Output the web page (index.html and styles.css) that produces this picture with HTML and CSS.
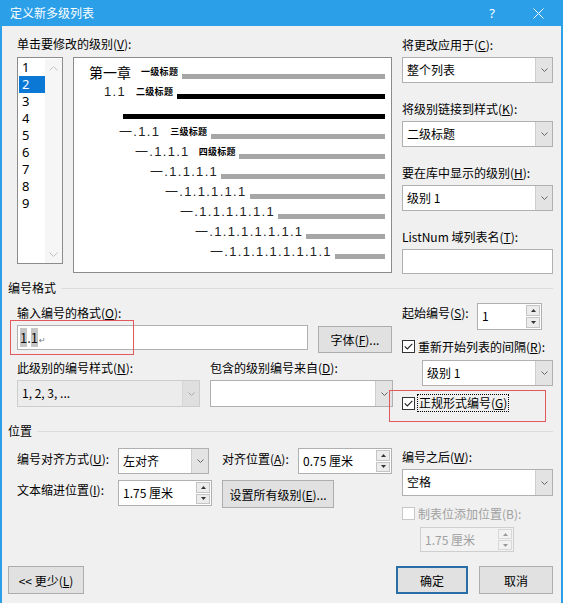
FILE: index.html
```html
<!DOCTYPE html>
<html lang="zh-CN">
<head>
<meta charset="utf-8">
<title>定义新多级列表</title>
<link rel="stylesheet" href="styles.css">
</head>
<body>
<div class="dialog">
  <div class="titlebar">
    <span class="title">定义新多级列表</span>
    <span class="tb-btn help">?</span>
    <span class="tb-btn close"><svg width="11" height="11" viewBox="0 0 11 11"><path d="M0.5 0.5L10.5 10.5M10.5 0.5L0.5 10.5" stroke="#fff" stroke-width="1" fill="none"/></svg></span>
  </div>

  <div class="content">
    <div class="top">
      <div class="top-left">
        <div class="lbl">单击要修改的级别(<u>V</u>):</div>
        <div class="levels">
          <div class="listbox">
            <div class="items">
              <div class="item">1</div>
              <div class="item sel">2</div>
              <div class="item">3</div>
              <div class="item">4</div>
              <div class="item">5</div>
              <div class="item">6</div>
              <div class="item">7</div>
              <div class="item">8</div>
              <div class="item">9</div>
            </div>
            <div class="vscroll">
              <svg width="9" height="5" viewBox="0 0 9 5"><path d="M0.5 4.5L4.5 0.5L8.5 4.5" stroke="#c2c2c2" fill="none"/></svg>
              <svg width="9" height="5" viewBox="0 0 9 5"><path d="M0.5 0.5L4.5 4.5L8.5 0.5" stroke="#c2c2c2" fill="none"/></svg>
            </div>
          </div>
          <div class="preview">
            <div class="pv p1"><span class="ch">第一章</span><span class="tag">一级标题</span><span class="bar"></span></div>
            <div class="pv p2"><span class="num">1.1</span><span class="tag">二级标题</span><span class="bar k"></span></div>
            <div class="pv p3"><span class="bar k"></span></div>
            <div class="pv p4"><span class="num">一.1.1</span><span class="tag">三级标题</span><span class="bar"></span></div>
            <div class="pv p5"><span class="num">一.1.1.1</span><span class="tag t5">四级标题</span><span class="bar"></span></div>
            <div class="pv p6"><span class="num">一.1.1.1.1</span><span class="bar"></span></div>
            <div class="pv p7"><span class="num">一.1.1.1.1.1</span><span class="bar"></span></div>
            <div class="pv p8"><span class="num">一.1.1.1.1.1.1</span><span class="bar"></span></div>
            <div class="pv p9"><span class="num">一.1.1.1.1.1.1.1</span><span class="bar"></span></div>
            <div class="pv p10"><span class="num">一.1.1.1.1.1.1.1.1</span><span class="bar"></span></div>
          </div>
        </div>
      </div>

      <div class="top-right">
        <div class="lbl">将更改应用于(<u>C</u>):</div>
        <div class="combo mt4"><span class="val">整个列表</span><span class="arr"><svg width="7" height="4" viewBox="0 0 7 4"><path d="M0.5 0.5L3.5 3.5L6.5 0.5" stroke="#666" fill="none"/></svg></span></div>
        <div class="lbl mt18">将级别链接到样式(<u>K</u>):</div>
        <div class="combo mt4"><span class="val">二级标题</span><span class="arr"><svg width="7" height="4" viewBox="0 0 7 4"><path d="M0.5 0.5L3.5 3.5L6.5 0.5" stroke="#666" fill="none"/></svg></span></div>
        <div class="lbl mt18">要在库中显示的级别(<u>H</u>):</div>
        <div class="combo mt4"><span class="val">级别 1</span><span class="arr"><svg width="7" height="4" viewBox="0 0 7 4"><path d="M0.5 0.5L3.5 3.5L6.5 0.5" stroke="#666" fill="none"/></svg></span></div>
        <div class="lbl mt18">ListNum 域列表名(<u>T</u>):</div>
        <div class="text mt4"></div>
      </div>
    </div>

    <div class="ghead">编号格式</div>

    <div class="sect">
      <div class="sect-left fmt-left">
        <div class="lbl">输入编号的格式(<u>O</u>):</div>
        <div class="input-row">
          <div class="text fmt-input"><span class="shade">1</span>.<span class="shade">1</span><span class="ret">↵</span></div>
          <div class="btn font-btn">字体(<u>F</u>)...</div>
        </div>
        <div class="two-col">
          <div class="lbl">此级别的编号样式(<u>N</u>):</div>
          <div class="lbl">包含的级别编号来自(<u>D</u>):</div>
          <div class="combo dis tall"><span class="val">1, 2, 3, ...</span><span class="arr"><svg width="7" height="4" viewBox="0 0 7 4"><path d="M0.5 0.5L3.5 3.5L6.5 0.5" stroke="#aaa" fill="none"/></svg></span></div>
          <div class="combo tall"><span class="val"></span><span class="arr"><svg width="7" height="4" viewBox="0 0 7 4"><path d="M0.5 0.5L3.5 3.5L6.5 0.5" stroke="#666" fill="none"/></svg></span></div>
        </div>
      </div>
      <div class="sect-right fmt-right">
        <div class="start-row">
          <div class="lbl start-lbl">起始编号(<u>S</u>):</div>
          <div class="spin start-spin"><span class="val">1</span><span class="btns"><span><svg width="5" height="3" viewBox="0 0 5 3"><path d="M0 3L2.5 0L5 3Z" fill="#333"/></svg></span><span><svg width="5" height="3" viewBox="0 0 5 3"><path d="M0 0L2.5 3L5 0Z" fill="#333"/></svg></span></span></div>
        </div>
        <div class="chk-row restart"><span class="chk"><svg width="9" height="7" viewBox="0 0 9 7"><path d="M0.7 3.4L3.3 6L8.3 0.8" stroke="#222" stroke-width="1.1" fill="none"/></svg></span><span>重新开始列表的间隔(<u>R</u>):</span></div>
        <div class="combo level-combo"><span class="val">级别 1</span><span class="arr"><svg width="7" height="4" viewBox="0 0 7 4"><path d="M0.5 0.5L3.5 3.5L6.5 0.5" stroke="#666" fill="none"/></svg></span></div>
        <div class="chk-row legal"><span class="chk"><svg width="9" height="7" viewBox="0 0 9 7"><path d="M0.7 3.4L3.3 6L8.3 0.8" stroke="#222" stroke-width="1.1" fill="none"/></svg></span><span class="focus">正规形式编号(<u>G</u>)</span></div>
      </div>
    </div>

    <div class="ghead pos-head">位置</div>

    <div class="sect">
      <div class="sect-left pos-left">
        <div class="prow">
          <div class="lbl plbl r1">编号对齐方式(<u>U</u>):</div>
          <div class="combo align-combo"><span class="val">左对齐</span><span class="arr"><svg width="7" height="4" viewBox="0 0 7 4"><path d="M0.5 0.5L3.5 3.5L6.5 0.5" stroke="#666" fill="none"/></svg></span></div>
          <div class="lbl plbl2 r1">对齐位置(<u>A</u>):</div>
          <div class="spin wspin"><span class="val">0.75 厘米</span><span class="btns"><span><svg width="5" height="3" viewBox="0 0 5 3"><path d="M0 3L2.5 0L5 3Z" fill="#333"/></svg></span><span><svg width="5" height="3" viewBox="0 0 5 3"><path d="M0 0L2.5 3L5 0Z" fill="#333"/></svg></span></span></div>
        </div>
        <div class="prow prow2">
          <div class="lbl plbl r2">文本缩进位置(<u>I</u>):</div>
          <div class="spin wspin"><span class="val">1.75 厘米</span><span class="btns"><span><svg width="5" height="3" viewBox="0 0 5 3"><path d="M0 3L2.5 0L5 3Z" fill="#333"/></svg></span><span><svg width="5" height="3" viewBox="0 0 5 3"><path d="M0 0L2.5 3L5 0Z" fill="#333"/></svg></span></span></div>
          <div class="btn setall">设置所有级别(<u>E</u>)...</div>
        </div>
      </div>
      <div class="sect-right pos-right">
        <div class="lbl">编号之后(<u>W</u>):</div>
        <div class="combo tall mt4"><span class="val">空格</span><span class="arr"><svg width="7" height="4" viewBox="0 0 7 4"><path d="M0.5 0.5L3.5 3.5L6.5 0.5" stroke="#666" fill="none"/></svg></span></div>
        <div class="chk-row tabrow"><span class="chk dis"></span><span class="dis-text">制表位添加位置(B):</span></div>
        <div class="spin dis tabspin"><span class="val">1.75 厘米</span><span class="btns"><span><svg width="5" height="3" viewBox="0 0 5 3"><path d="M0 3L2.5 0L5 3Z" fill="#999"/></svg></span><span><svg width="5" height="3" viewBox="0 0 5 3"><path d="M0 0L2.5 3L5 0Z" fill="#999"/></svg></span></span></div>
      </div>
    </div>

    <div class="footer">
      <div class="btn less">&lt;&lt; 更少(<u>L</u>)</div>
      <div class="btn ok def">确定</div>
      <div class="btn cancel">取消</div>
    </div>
  </div>

  <div class="mark mark1"></div>
  <div class="mark mark2"></div>
</div>
</body>
</html>
```

FILE: styles.css
```css
* { box-sizing: border-box; }
html, body { margin: 0; padding: 0; }
body {
  width: 563px;
  height: 603px;
  overflow: hidden;
  background: #f0f0f0;
  font-family: "Noto Sans CJK SC", "Noto Sans", sans-serif;
  font-size: 12px;
  color: #000;
}
u { text-decoration: underline; text-underline-offset: 1px; }

.dialog {
  position: relative;
  width: 563px;
  height: 603px;
  border-left: 2px solid #2b9fe8;
  border-right: 2px solid #2b9fe8;
  background: #f0f0f0;
}

/* title bar */
.titlebar {
  display: flex;
  align-items: center;
  height: 26px;
  background: #2b9fe8;
  color: #fff;
}
.title { padding-left: 8px; line-height: 16px; }
.tb-btn {
  width: 46px;
  height: 26px;
  display: flex;
  align-items: center;
  justify-content: center;
}
.help { margin-left: auto; font-family: "Noto Sans", sans-serif; font-size: 13px; }

.content { padding: 0 8px 0 6px; }

.lbl { height: 16px; line-height: 16px; white-space: nowrap; }
.mt4 { margin-top: 4px; }
.mt18 { margin-top: 18px; }

/* top area */
.top { display: flex; gap: 10px; padding: 10px 0 0 9px; }
.top-left { width: 375px; }
.top-right { width: 151px; padding-top: 1px; }
.levels { display: flex; gap: 10px; margin-top: 5px; align-items: flex-start; }

.listbox {
  display: flex;
  width: 46px;
  height: 207px;
  border: 1px solid #8c8c8c;
  background: #fff;
  padding: 1px 0 0 1px;
}
.items { width: 26px; }
.item {
  height: 17px;
  line-height: 17px;
  padding-left: 3px;
  font-family: "Noto Sans", sans-serif;
  font-size: 13px;
}
.item.sel { background: #0a78d4; color: #fff; }
.vscroll {
  flex: 1;
  display: flex;
  flex-direction: column;
  justify-content: space-between;
  align-items: center;
  padding: 7px 0 6px;
  background: #f6f6f6;
}

.preview {
  width: 319px;
  height: 216px;
  border: 1px solid #8c8c8c;
  background: #fff;
  padding: 4px 6px 0 0;
}
.pv { display: flex; align-items: center; height: 20px; white-space: nowrap; }
.pv .bar { flex: 1; height: 5px; margin-top: 8px; background: #a6a6a6; }
.pv .bar.k { background: #000; }
.pv .ch { font-size: 14px; line-height: 16px; }
.pv .num {
  font-family: "Liberation Sans", "Noto Sans CJK SC", sans-serif;
  font-size: 13px;
  letter-spacing: 1.3px;
  line-height: 16px;
  color: #222;
}
.pv .tag {
  font-size: 9px;
  letter-spacing: 0.3px;
  line-height: 12px;
  font-weight: bold;
  margin-left: 10px;
  margin-right: 4px;
}
.pv .tag.t5 { margin-left: 9px; margin-right: 3px; }
.pv .num + .bar { margin-left: 3px; }
.p1 { padding-left: 15px; }
.p2 { padding-left: 30px; }
.p3 { padding-left: 49px; }
.p4 { padding-left: 45px; }
.p5 { padding-left: 61px; }
.p6 { padding-left: 76px; }
.p7 { padding-left: 91px; }
.p8 { padding-left: 106px; }
.p9 { padding-left: 121px; }
.p10 { padding-left: 136px; }

/* controls */
.combo {
  display: flex;
  height: 26px;
  border: 1px solid #b0b0b0;
  background: #fff;
}
.combo.tall { height: 27px; }
.combo .val {
  flex: 1;
  padding-left: 4px;
  line-height: 24px;
  white-space: nowrap;
  overflow: hidden;
}
.combo .arr {
  width: 17px;
  background: #e3e3e3;
  border-left: 1px solid #cdcdcd;
  display: flex;
  align-items: center;
  justify-content: center;
}
.combo.dis { background: #ececec; border-color: #cdcdcd; }
.combo.dis .arr { background: #dfdfdf; border-left-color: #d6d6d6; }

.text { height: 25px; border: 1px solid #b0b0b0; background: #fff; }

.spin {
  display: flex;
  height: 26px;
  border: 1px solid #b0b0b0;
  background: #fff;
}
.spin .val { flex: 1; padding-left: 4px; line-height: 24px; white-space: nowrap; }
.spin .btns {
  width: 15px;
  display: flex;
  flex-direction: column;
  gap: 1px;
  padding: 1px 1px 1px 0;
}
.spin .btns span {
  flex: 1;
  background: #ececec;
  border: 1px solid #c4c4c4;
  display: flex;
  align-items: center;
  justify-content: center;
}
.spin.dis { background: #f2f2f2; border-color: #cfcfcf; color: #a0a0a0; }
.spin.dis .btns span { background: #f2f2f2; border-color: #d8d8d8; }

.btn {
  display: flex;
  align-items: center;
  justify-content: center;
  height: 28px;
  background: #e1e1e1;
  border: 1px solid #adadad;
  white-space: nowrap;
}
.btn.def { border: 2px solid #2a6ea8; }

.chk-row { display: flex; align-items: center; height: 16px; white-space: nowrap; }
.chk {
  width: 13px;
  height: 13px;
  border: 1px solid #333;
  background: #fff;
  margin-right: 3px;
  display: flex;
  align-items: center;
  justify-content: center;
  flex: none;
}
.chk.dis { border-color: #c8c8c8; }
.dis-text { color: #a0a0a0; }
.focus { outline: 1px dotted #000; padding: 0 1px; line-height: 16px; }

/* group headers */
.ghead {
  display: flex;
  align-items: center;
  height: 16px;
  line-height: 16px;
  margin-top: 6px;
}
.ghead::after {
  content: "";
  flex: 1;
  height: 1px;
  background: #dcdcdc;
  margin-left: 5px;
}
.pos-head { margin-top: 12px; }

/* sections */
.sect { display: flex; gap: 9px; padding-left: 9px; }
.sect-left { width: 376px; }
.sect-right { width: 151px; }

.fmt-left { padding-top: 9px; }
.input-row { display: flex; gap: 10px; margin-top: 4px; align-items: flex-start; }
.fmt-input {
  width: 291px;
  padding-left: 2px;
  line-height: 23px;
  font-size: 13px;
  color: #111;
}
.shade { background: #c6c6c6; }
.ret { font-family: "DejaVu Sans", sans-serif; font-size: 8px; color: #777; margin-left: 1px; }
.font-btn { width: 74px; height: 27px; margin-top: 1px; }
.two-col {
  display: grid;
  grid-template-columns: 183px 183px;
  column-gap: 10px;
  row-gap: 4px;
  margin-top: 7px;
}

.fmt-right { padding-top: 7px; }
.start-row { display: flex; align-items: flex-start; }
.start-lbl { width: 75px; margin-top: 2px; }
.start-spin { width: 65px; height: 27px; }
.restart { margin-top: 8px; }
.level-combo { margin: 6px 0 0 20px; }
.legal { margin-top: 9px; }

.pos-left { padding-top: 9px; }
.prow { display: flex; align-items: flex-start; }
.prow2 { margin-top: 6px; }
.plbl { width: 101px; }
.plbl2 { width: 76px; margin-left: 13px; }
.r1 { height: 22px; line-height: 22px; }
.r2 { height: 20px; line-height: 20px; }
.align-combo { width: 91px; }
.wspin { width: 94px; }
.setall { width: 112px; margin-left: 10px; }

.pos-right { padding-top: 10px; }
.tabrow { margin-top: 9px; }
.tabspin { width: 94px; height: 25px; margin: 6px 0 0 18px; }

/* footer */
.footer { display: flex; margin-top: 14px; }
.less { width: 76px; }
.ok { width: 72px; margin-left: auto; }
.cancel { width: 74px; margin-left: 11px; }

/* annotation rectangles */
.mark { position: absolute; border: 1px solid #e2595d; }
.mark1 { left: 8px; top: 320px; width: 124px; height: 35px; }
.mark2 { left: 387px; top: 390px; width: 157px; height: 32px; }
```
